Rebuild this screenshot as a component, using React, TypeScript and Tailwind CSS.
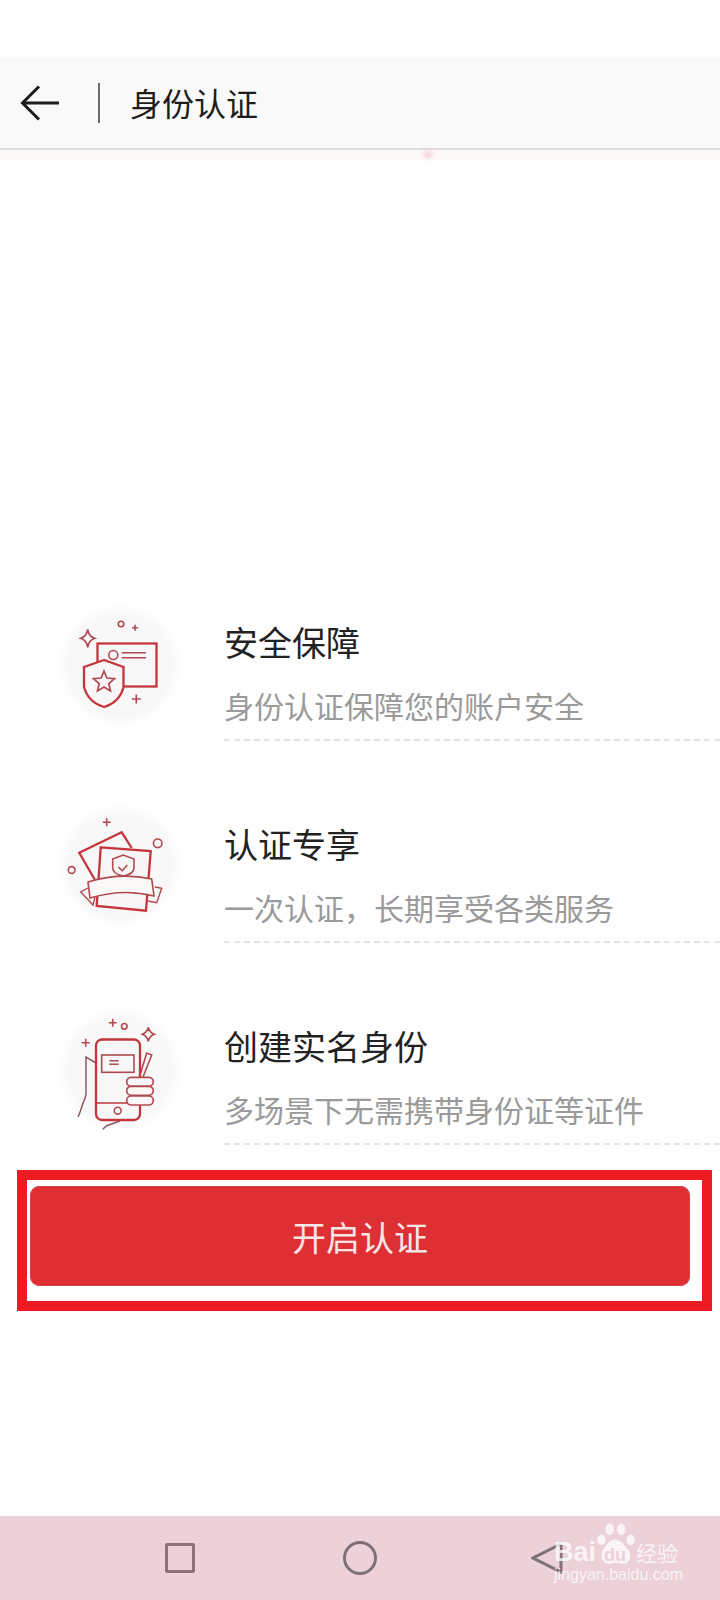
const cjk = "font-['Noto_Sans_CJK_SC','Liberation_Sans',sans-serif]";

const stroke = "#c4363b";
const thin = "#b04a50";
const fillPale = "#fbf8f8";

const Plus = ({ x, y, s }: { x: number; y: number; s: number }) => (
  <path d={`M${x - s} ${y}H${x + s}M${x} ${y - s}V${y + s}`} stroke={thin} strokeWidth="1.6" fill="none" />
);

const Sparkle = ({ x, y, w, h }: { x: number; y: number; w: number; h: number }) => (
  <path
    d={`M${x} ${y - h}Q${x + 1} ${y - 2} ${x + w} ${y}Q${x + 1} ${y + 2} ${x} ${y + h}Q${x - 1} ${y + 2} ${x - w} ${y}Q${x - 1} ${y - 2} ${x} ${y - h}Z`}
    stroke={thin}
    strokeWidth="1.7"
    fill="none"
  />
);

const Blob = () => (
  <>
    <defs>
      <radialGradient id="blob">
        <stop offset="0%" stopColor="#f7f7f8" />
        <stop offset="82%" stopColor="#f8f8f9" />
        <stop offset="100%" stopColor="#ffffff" />
      </radialGradient>
    </defs>
    <circle cx="80" cy="75" r="63" fill="url(#blob)" />
  </>
);

const ShieldIcon = () => (
  <svg viewBox="0 0 160 150" className="w-[160px] h-[150px] shrink-0">
    <Blob />
    <g fill="none" stroke={stroke} strokeWidth="2.3">
      <rect x="57.5" y="53.5" width="59" height="43" />
      <path d="M64 70L44 77V97Q48 112 64 117Q80 112 83.5 97V77Z" fill="#f8f6f6" />
      <path
        d="M64 81L66.9 88L74.5 88.6L68.8 93.5L70.5 100.9L64 97L57.5 100.9L59.2 93.5L53.5 88.6L61.1 88Z"
        stroke={thin}
        strokeWidth="1.7"
      />
      <circle cx="73.3" cy="65" r="4.5" stroke={thin} strokeWidth="1.6" fill="#f8f6f6" />
      <path d="M81.7 62.7H106M81.7 67.7H106" stroke={thin} strokeWidth="1.4" />
      <circle cx="81" cy="34" r="2.8" stroke={thin} strokeWidth="1.6" />
    </g>
    <Plus x={95} y={37.7} s={3} />
    <Plus x={96.3} y={109} s={4.5} />
    <Sparkle x={47.7} y={48.3} w={7} h={9} />
  </svg>
);

const RibbonIcon = () => (
  <svg viewBox="0 2 160 150" className="w-[160px] h-[150px] shrink-0">
    <Blob />
    <g fill="none" stroke={stroke} strokeWidth="2.3">
      <path d="M55 90L39.3 62.7L81.7 42.3L91.7 58" />
      <path d="M60.7 57.3L110.7 61L106 120.7L56.7 116Z" fill="#f8f6f6" />
      <path d="M83.3 65L72.7 69V78Q73 84 83.3 86Q94 84 94 78V69Z" stroke={thin} strokeWidth="1.6" />
      <path d="M78.3 77L82.3 80.7L87.3 75" stroke={thin} strokeWidth="1.6" />
      <path d="M48 98L40.7 102L53 115L55 107" stroke={thin} strokeWidth="1.4" fill={fillPale} />
      <path d="M115 97L121.7 98.3L116.7 112.7L108 111" stroke={thin} strokeWidth="1.4" fill={fillPale} />
      <path d="M48 92Q80 82 111.7 89L114 106Q83 98 50 108Z" stroke={thin} strokeWidth="1.6" fill={fillPale} />
      <circle cx="117.7" cy="53.3" r="4.3" stroke={thin} strokeWidth="1.6" />
      <circle cx="31.7" cy="80" r="3.4" stroke={thin} strokeWidth="1.6" />
    </g>
    <Plus x={66.7} y={32.3} s={4} />
  </svg>
);

const PhoneIcon = () => (
  <svg viewBox="0 -1 160 150" className="w-[160px] h-[150px] shrink-0">
    <Blob />
    <g fill="none" stroke={stroke} strokeWidth="2.3">
      <path d="M56 68L46 62V98Q46 102 43 108Q40 118 38 122" stroke="#8f5a60" strokeWidth="1.5" />
      <path d="M62.7 134.3L66.7 130.7L80 126" stroke="#8f5a60" strokeWidth="1.5" />
      <path d="M100 80L106.7 58L111.7 60L103 82" stroke={thin} strokeWidth="1.6" />
      <rect x="56" y="44.5" width="44" height="80.5" rx="6" />
      <path d="M56 108H100" strokeWidth="1.6" />
      <rect x="61.7" y="60" width="32.3" height="17.3" stroke={thin} strokeWidth="1.6" />
      <path d="M69.3 65.7H78.7M69.3 69.3H78.7" stroke={thin} strokeWidth="1.4" />
      <circle cx="77.7" cy="115.7" r="3.4" stroke={thin} strokeWidth="1.6" />
      <rect x="86.7" y="82.3" width="26.6" height="9" rx="4.5" fill={fillPale} stroke={thin} strokeWidth="1.7" />
      <rect x="86.7" y="91.3" width="26.6" height="9" rx="4.5" fill={fillPale} stroke={thin} strokeWidth="1.7" />
      <rect x="86.7" y="101" width="26.6" height="9" rx="4.5" fill={fillPale} stroke={thin} strokeWidth="1.7" />
      <circle cx="84.3" cy="31.3" r="2.8" stroke={thin} strokeWidth="1.6" />
    </g>
    <Plus x={72.7} y={27.7} s={4} />
    <Plus x={45.7} y={47.7} s={4} />
    <Sparkle x={108.3} y={39.3} w={6} h={7} />
  </svg>
);

const rows = [
  { icon: <ShieldIcon />, title: "安全保障", desc: "身份认证保障您的账户安全" },
  { icon: <RibbonIcon />, title: "认证专享", desc: "一次认证，长期享受各类服务" },
  { icon: <PhoneIcon />, title: "创建实名身份", desc: "多场景下无需携带身份证等证件" },
];

const Watermark = () => (
  <div className="absolute left-[554px] top-[1522px] w-[130px] h-[64px] text-white/75">
    <svg viewBox="0 0 42 42" className="absolute left-[39px] top-0 w-[44px] h-[44px]" fill="currentColor">
      <ellipse cx="8" cy="17" rx="4" ry="5" />
      <ellipse cx="16" cy="7" rx="4" ry="5.5" />
      <ellipse cx="27" cy="7" rx="4" ry="5.5" />
      <ellipse cx="36" cy="17" rx="4" ry="5" />
      <path d="M21 17C15 17 13 22 10 26C7 30 7 39 15 40C18 40 19 39 21 39C24 39 26 40 29 40C37 39 37 30 33 26C30 22 27 17 21 17Z" />
    </svg>
    <span className="absolute left-0 top-[14px] text-[27px] leading-[32px] font-bold font-['Liberation_Sans',sans-serif]">
      Bai
    </span>
    <span className="absolute left-[50px] top-[24px] text-[18px] leading-[18px] font-bold text-[#ecd1d9] font-['Liberation_Sans',sans-serif]">
      du
    </span>
    <span className={`absolute left-[82px] top-[17px] text-[21px] leading-[26px] ${cjk}`}>经验</span>
    <span className="absolute left-0 top-[43px] text-[16px] leading-[20px] whitespace-nowrap font-['Liberation_Sans',sans-serif]">
      jingyan.baidu.com
    </span>
  </div>
);

export default function App() {
  return (
    <div className={`relative flex flex-col w-[720px] h-[1600px] bg-[#fefefe] overflow-hidden ${cjk}`}>
      <div className="h-[58px] bg-white" />
      <div className="flex items-center h-[92px] bg-[#f9f9f9] border-b-2 border-[#dedcdc]">
        <svg viewBox="0 0 40 36" className="ml-[20px] w-[40px] h-[36px]" fill="none" stroke="#1c1c1c" strokeWidth="3">
          <path d="M39 18H3M19 1.5L2.5 18L19 34.5" />
        </svg>
        <div className="ml-[38px] w-[2px] h-[40px] bg-[#6b6b6b]" />
        <span className="ml-[30px] mb-[3px] text-[32px] leading-[40px] text-[#1d1d1d]">身份认证</span>
      </div>
      <div className="relative h-[10px] bg-[#fdf9f9]">
        <div className="absolute left-[423px] top-[1px] w-[10px] h-[7px] rounded-full bg-[#f6d5da] blur-[2px]" />
      </div>

      <div className="mt-[430px] flex flex-col gap-[51px]">
        {rows.map((row) => (
          <div key={row.title} className="flex ml-[40px]">
            {row.icon}
            <div className="ml-[24px] flex-1 h-[151px] pt-[32px] border-b-2 border-dashed border-[#e4e4e4]">
              <div className="text-[34px] leading-[40px] text-[#222222]">{row.title}</div>
              <div className="mt-[23px] text-[30px] leading-[40px] text-[#9a9a9a]">{row.desc}</div>
            </div>
          </div>
        ))}
      </div>

      <div className="mt-[25px] ml-[17px] w-[695px] h-[141px] border-[10px] border-[#ed1c24] bg-white pt-[6px] pl-[3px] pr-[12px]">
        <button className="flex items-center justify-center w-full h-[100px] rounded-[9px] border border-[#cf4347] bg-[#de3034] text-[34px] text-[#f8e6e6]">
          开启认证
        </button>
      </div>

      <div className="mt-auto flex items-center h-[84px] bg-[#ecd1d9]">
        <div className="ml-[165px] w-[30px] h-[30px] rounded-[2px] border-[3px] border-[#8f7379]" />
        <div className="ml-[148px] w-[34px] h-[34px] rounded-full border-[3px] border-[#7f7077]" />
        <svg viewBox="0 0 32 32" className="ml-[154px] w-[32px] h-[32px]" fill="none" stroke="#7f7077" strokeWidth="3">
          <path d="M30 2L2 16L30 30V2" />
        </svg>
      </div>

      <Watermark />
    </div>
  );
}
